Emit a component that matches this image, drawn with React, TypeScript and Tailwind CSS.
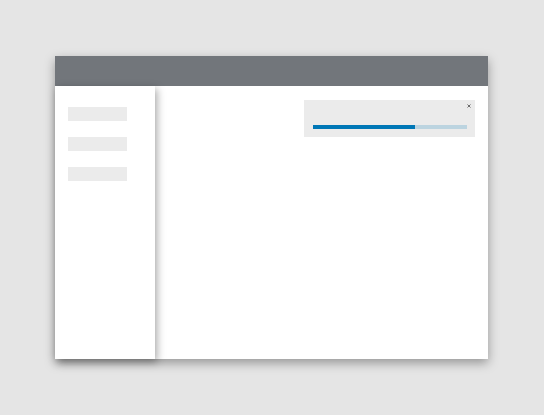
export default function App() {
  return (
    <div className="min-h-screen bg-[#e5e5e5] pl-[55px] pt-[56px] font-['Liberation_Sans',sans-serif]">
      <div className="flex h-[303px] w-[433px] flex-col bg-white shadow-[0_4px_10px_rgba(0,0,0,0.35)]">
        <header className="h-[30px] bg-[#72767b]" />
        <div className="flex flex-1">
          <aside className="relative z-10 flex w-[100px] flex-col gap-4 bg-white px-[13px] pt-[21px] shadow-[2px_3px_8px_rgba(0,0,0,0.35)]">
            <div className="h-[14px] w-[59px] bg-[#ebebeb]" />
            <div className="h-[14px] w-[59px] bg-[#ebebeb]" />
            <div className="h-[14px] w-[59px] bg-[#ebebeb]" />
          </aside>
          <main className="relative flex-1">
            <div className="absolute right-[13px] top-[14px] h-[37px] w-[171px] bg-[#ebebeb] pl-[9px] pr-[8px]">
              <button
                type="button"
                aria-label="Close"
                className="absolute right-[4px] top-[4px] flex h-[4px] w-[4px] items-center justify-center"
              >
                <svg width="4" height="4" viewBox="0 0 4 4">
                  <path d="M0.5 0.5 L3.5 3.5 M3.5 0.5 L0.5 3.5" stroke="#6b6b6b" strokeWidth="1" />
                </svg>
              </button>
              <div className="mt-[25px] h-[4px] w-full bg-[#bcd4e0]">
                <div className="h-full bg-[#0077b6]" style={{ width: "66%" }} />
              </div>
            </div>
          </main>
        </div>
      </div>
    </div>
  );
}
